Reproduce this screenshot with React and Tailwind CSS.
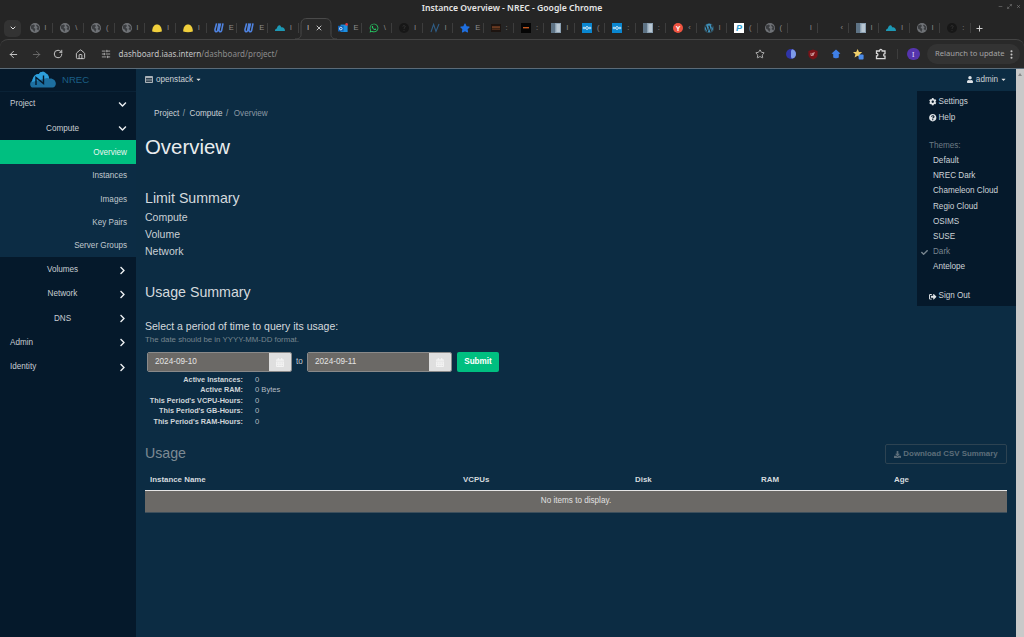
import React from 'react';
import { ArrowLeft, ArrowRight, RotateCw, Home, Star, ChevronDown, X, Plus, EllipsisVertical, SlidersHorizontal, Minus, Maximize2 } from 'lucide-react';
import { FaChevronDown, FaChevronRight, FaCog, FaQuestionCircle, FaCheck, FaUser, FaCaretDown, FaCalendarAlt, FaDownload, FaSignOutAlt, FaWhatsapp, FaWordpress, FaStar } from 'react-icons/fa';

const Globe = () => (
  <svg viewBox="0 0 10 10" className="w-[10px] h-[10px]"><circle cx="5" cy="5" r="5" fill="#6f7276"/><path d="M1 2.5 4 1.5 5 3 3.6 4.4 5.4 6 4.4 9 2.6 6.6 1 5.4ZM7 1.4 9.4 4 8.6 7.5 6.4 6 7.6 4.4 6 2.6Z" fill="#3b3d40"/></svg>
);
const Dome = () => (
  <svg viewBox="0 0 10 10" className="w-[10px] h-[10px]"><path d="M.2 8.6C0 4 2.2 1.4 5 1.4S10 4 9.8 8.6C7 9.4 3 9.4.2 8.6Z" fill="#f0cf3c"/></svg>
);
const U = () => (
  <svg viewBox="0 0 10 10" className="w-[10px] h-[10px]"><path d="M2.6.4 1 6.5C.7 8.8 2.6 9.6 3.6 7.6L5 .4M6.6.4 5 6.5C4.7 8.8 6.6 9.6 7.6 7.6L9 .4" fill="none" stroke="#4f83e0" strokeWidth="1.6"/></svg>
);
const Cloud = () => (
  <svg viewBox="0 0 10 10" className="w-[10px] h-[10px]"><path d="M0 8C-.1 6.2 1 5.4 1.8 5.4 2.4 3.2 3.6 2 4.6 2.2 5.6 2.4 6 3.8 6.6 4.4 8 4 10 5.2 10 8Z" fill="#1d98b4"/></svg>
);
const Outlook = () => (
  <svg viewBox="0 0 10 10" className="w-[10px] h-[10px]"><rect x="2.6" y="1.6" width="7" height="7.4" fill="#1c8fe0"/><rect x="0" y="2.8" width="5.6" height="5.6" fill="#0f62b8"/><circle cx="2.8" cy="5.6" r="1.3" fill="none" stroke="#fff" strokeWidth=".8"/><circle cx="8.6" cy="1.4" r="1.3" fill="#e23b3b"/></svg>
);
const Dark = () => (
  <svg viewBox="0 0 10 10" className="w-[10px] h-[10px]"><circle cx="5" cy="5" r="5" fill="#171717"/><path d="M3.8 3.4C4 2.4 6.2 2.4 6.2 3.6 6.2 4.6 5 4.6 5 5.8M5 7V7.8" stroke="#333" strokeWidth="1" fill="none"/></svg>
);
const NIcon = () => (
  <svg viewBox="0 0 10 10" className="w-[10px] h-[10px]"><path d="M1 9 3.6 1.4 6 8.4 9 1" fill="none" stroke="#2f5d86" strokeWidth="1.1"/></svg>
);
const RedBar = () => (
  <svg viewBox="0 0 10 10" className="w-[10px] h-[10px]"><rect y="1" width="10" height="8" fill="#1d1410"/><rect x="1" y="3.4" width="8" height="1.3" fill="#8a4a28"/><rect x="1" y="5.6" width="8" height="1" fill="#6d3c20"/></svg>
);
const BlackBar = () => (
  <svg viewBox="0 0 10 10" className="w-[10px] h-[10px]"><rect width="10" height="10" fill="#050505"/><rect x="2" y="4" width="6" height="1.4" fill="#c4571e"/></svg>
);
const Book = () => (
  <svg viewBox="0 0 10 10" className="w-[10px] h-[10px]"><rect width="10" height="10" fill="#8ba0b2"/><rect x="0" width="4" height="10" fill="#5e7385"/><path d="M5.4 2H9M5.4 4H9M5.4 6H9M5.4 8H9" stroke="#e6edf2" strokeWidth="1"/></svg>
);
const NC = () => (
  <svg viewBox="0 0 10 10" className="w-[10px] h-[10px]"><rect width="10" height="10" fill="#0a86cf"/><circle cx="5" cy="5" r="1.4" fill="none" stroke="#fff" strokeWidth=".8"/><circle cx="2" cy="5" r=".9" fill="none" stroke="#fff" strokeWidth=".7"/><circle cx="8" cy="5" r=".9" fill="none" stroke="#fff" strokeWidth=".7"/></svg>
);
const Y = () => (
  <div className="w-[10px] h-[10px] rounded-full bg-[#ee5340] flex items-center justify-center text-[7px] font-bold text-white font-['Liberation_Sans',sans-serif] leading-none">Y</div>
);
const P = () => (
  <div className="w-[10px] h-[10px] bg-white flex items-center justify-center text-[9px] font-bold italic text-[#2a9bd0] font-['Liberation_Sans',sans-serif] leading-none">P</div>
);
const Wa = () => <FaWhatsapp className="w-[10px] h-[10px] text-[#25d366]" />;
const Wp = () => <FaWordpress className="w-[10px] h-[10px] text-[#3f93bd]" />;
const St = () => <FaStar className="w-[10px] h-[10px] text-[#1f6fe0]" />;
const None = () => <div className="w-[10px] h-[10px]" />;

const leftTabs = [[Globe,'l'],[Globe,'\\'],[Globe,'('],[Globe,'l'],[Dome,'l'],[Dome,'l'],[U,'E'],[U,'E'],[Cloud,'l']];
const rightTabs = [[Outlook,'E'],[Wa,'\\'],[Dark,'l'],[NIcon,'l'],[St,'E'],[RedBar,':'],[BlackBar,':'],[Book,'l'],[NC,'('],[NC,':'],[Book,':'],[Y,'‹'],[Wp,'l'],[P,'('],[Globe,'('],[None,'l'],[None,'‹'],[Book,'l'],[Cloud,'l'],[Globe,'l'],[Dark,':']];

function Tab({ icon: Icon, ch, narrow }) {
  return (
    <div className={narrow ? 'relative w-[30.45px] shrink-0 h-[22px] flex items-center pl-[7px]' : 'relative w-[30.7px] shrink-0 h-[22px] flex items-center pl-[7px]'}>
      <Icon />
      <span className="absolute left-[22px] text-[7.5px] text-[#8e8e8e] leading-none font-['Liberation_Sans',sans-serif]">{ch}</span>
      <span className="absolute right-0 top-[6px] h-[10px] w-px bg-[#3d3d3d]" />
    </div>
  );
}

function SideRow({ children, open, pl }) {
  return (
    <div className="h-[24.3px] pt-[1.5px] flex items-center relative text-[#c8cdd2]">
      <div className={pl ? 'pl-[10px]' : 'w-[125px] text-center'}>{children}</div>
      {open === undefined ? null : open ? (
        <FaChevronDown className="absolute left-[117.5px] w-[9px] h-[9px] text-[#eceff2]" />
      ) : (
        <FaChevronRight className="absolute left-[117.5px] w-[9px] h-[9px] text-[#eceff2]" />
      )}
    </div>
  );
}

function SubRow({ children, active }) {
  return (
    <div className={active ? 'h-[24px] pt-[1.5px] flex items-center justify-end pr-[9px] bg-[#00bf80] text-[#e9f5f0]' : 'h-[23.25px] pt-[1.5px] flex items-center justify-end pr-[9px] text-[#c0c8ce]'}>{children}</div>
  );
}

const stats = [
  ["Active Instances:", "0"],
  ["Active RAM:", "0 Bytes"],
  ["This Period's VCPU-Hours:", "0"],
  ["This Period's GB-Hours:", "0"],
  ["This Period's RAM-Hours:", "0"],
];

const themes = ['Default', 'NREC Dark', 'Chameleon Cloud', 'Regio Cloud', 'OSIMS', 'SUSE', 'Dark', 'Antelope'];

function DateInput({ value }) {
  return (
    <div className="flex h-[20px] w-[145px] rounded-[2px] overflow-hidden border border-[#8a8a8a]">
      <div className="flex-1 bg-[#6b6966] flex items-center pl-[7px] text-[#e4e4e4] text-[8.2px]">{value}</div>
      <div className="w-[22px] bg-[#dfdfdf] flex items-center justify-center">
        <FaCalendarAlt className="w-[8px] h-[9px] text-[#f4f4f4]" />
      </div>
    </div>
  );
}

export default function App() {
  return (
    <div className="w-[1024px] h-[637px] overflow-hidden flex flex-col bg-[#252525] font-['Liberation_Sans',sans-serif]">
      {/* Title bar */}
      <div className="h-[17px] shrink-0 relative flex items-center justify-center font-['Noto_Sans',sans-serif] text-[8.65px] font-semibold text-[#e6e6e6]">
        Instance Overview - NREC - Google Chrome
        <div className="absolute right-[3px] top-[4px] flex items-center gap-[4px] text-[#a0a0a0]">
          <Minus className="w-[5px] h-[5px]" />
          <Maximize2 className="w-[5px] h-[5px]" />
          <X className="w-[5px] h-[5px]" />
        </div>
      </div>
      {/* Tab strip */}
      <div className="h-[22px] shrink-0 relative flex items-center pl-[4px] font-['Noto_Sans',sans-serif] z-10">
        <div className="w-[17px] h-[17px] rounded-[5px] bg-[#333333] flex items-center justify-center mr-[1.5px] shrink-0">
          <ChevronDown className="w-[8px] h-[8px] text-[#e0e0e0]" strokeWidth={3} />
        </div>
        {leftTabs.map(([I, c], i) => <Tab key={i} icon={I} ch={c} />)}
        <div className="relative w-[32.7px] shrink-0 h-[22px] flex items-center">
          <svg viewBox="0 0 44 22" className="absolute left-[-4px] top-0 w-[44px] h-[23px]">
            <path d="M0 21.5C4 21.5 6 20 6 17V7C6 3 8 1 12 1H30C34 1 36 3 36 7V17C36 20 38 21.5 42 21.5" fill="#292929" stroke="#4a4a4a" strokeWidth="1"/>
          </svg>
          <span className="absolute left-[8.5px] text-[7.5px] text-[#c8c8c8] leading-none font-['Liberation_Sans',sans-serif]">l</span>
          <X className="absolute left-[16px] w-[8px] h-[8px] text-[#e0e0e0]" strokeWidth={2.5} />
        </div>
        {rightTabs.map(([I, c], i) => <Tab key={i} narrow icon={I} ch={c} />)}
        <Plus className="w-[9px] h-[9px] ml-[4px] text-[#d8d8d8]" strokeWidth={2.5} />
      </div>
      {/* Toolbar */}
      <div className="h-[29px] shrink-0 bg-[#292929] border-t border-[#444444] rounded-t-[8px] flex items-center text-[#c8c8c8] relative">
        <ArrowLeft className="w-[11px] h-[11px] ml-[8px] text-[#d0d0d0]" strokeWidth={2} />
        <ArrowRight className="w-[11px] h-[11px] ml-[11.5px] text-[#6d6d6d]" strokeWidth={2} />
        <RotateCw className="w-[10px] h-[10px] ml-[11.5px] text-[#d0d0d0]" strokeWidth={2.2} />
        <Home className="w-[11px] h-[11px] ml-[11.5px] text-[#d0d0d0]" strokeWidth={2} />
        <SlidersHorizontal className="w-[10px] h-[10px] ml-[15px] text-[#b8b8b8]" strokeWidth={2} />
        <div className="ml-[8px] text-[8.05px] font-['Noto_Sans',sans-serif] whitespace-nowrap">
          <span className="text-[#c4c4c4]">dashboard.iaas.intern</span><span className="text-[#8c8c8c]">/dashboard/project/</span>
        </div>
        <Star className="w-[10px] h-[10px] absolute left-[755px] text-[#c8c8c8]" strokeWidth={2} />
        <div className="absolute left-[786px] w-[10px] h-[10px] rounded-full bg-[#2f35a8] overflow-hidden flex justify-end">
          <div className="w-[5px] h-[10px] rounded-full bg-[#7d9be8]" />
        </div>
        <svg viewBox="0 0 10 10" className="absolute left-[808px] w-[10px] h-[11px]"><path d="M.4 1.4 5 0 9.6 1.4V5.6C9.6 8 7 9.4 5 10 3 9.4.4 8 .4 5.6Z" fill="#7a1318"/><path d="M3 3.4V6H4.6V3.4M5.4 6V3.4H7" stroke="#e8c8c8" strokeWidth=".7" fill="none"/></svg>
        <svg viewBox="0 0 10 10" className="absolute left-[831px] w-[10px] h-[10px]"><path d="M5 .6 9.4 4.4 7.8 5V8.6C6.6 9.6 3.4 9.6 2.2 8.6V5L.6 4.4Z" fill="#3f7fe6"/></svg>
        <svg viewBox="0 0 11 11" className="absolute left-[853px] w-[11px] h-[11px]"><path d="M4.6 0 6 3H9.2L6.8 5.2 7.6 8.6 4.6 6.8 1.6 8.6 2.4 5.2 0 3H3.2Z" fill="#f0cf6a"/><rect x="5.6" y="5.4" width="5" height="5" rx="1" fill="#4b8be8"/></svg>
        <svg viewBox="0 0 12 12" className="absolute left-[875px] w-[12px] h-[12px]"><path d="M1.5 3H4.4C4.4 1 7.2 1 7.2 3H10V5.6C8.2 5.6 8.2 8.2 10 8.2V10.6H1.5V8C3.4 8 3.4 5.4 1.5 5.4Z" fill="none" stroke="#d8d8d8" strokeWidth="1.3"/></svg>
        <div className="absolute left-[897px] top-[9px] w-px h-[10px] bg-[#3d3d3d]" />
        <div className="absolute left-[907px] w-[12.5px] h-[12.5px] rounded-full bg-[#5534ad] flex items-center justify-center text-[7px] text-[#e8e0ff] font-['Noto_Sans',sans-serif] leading-none">I</div>
        <div className="absolute left-[927px] top-[4px] w-[93px] h-[20px] rounded-full bg-[#333333] flex items-center pl-[8px] text-[7.6px] whitespace-nowrap text-[#a4a4a4] font-['Noto_Sans',sans-serif]">
          Relaunch to update
          <EllipsisVertical className="absolute right-[3px] w-[11px] h-[11px] text-[#c8c8c8]" strokeWidth={2.5} />
        </div>
      </div>
      <div className="h-px shrink-0 bg-[#5b6b78]" />
      {/* Page */}
      <div className="flex-1 flex min-h-0 text-[8.15px]">
        {/* Sidebar */}
        <aside className="w-[136px] shrink-0 bg-[#05192b] flex flex-col">
          <div className="h-[22.6px] flex items-center pl-[30px] border-b border-[#0a2236]">
            <svg viewBox="0 0 26 17" className="w-[26px] h-[17px]">
              <path d="M2 16.5C-.5 15-.5 11 2.4 9.8 3 5 6 2.5 9 3 10 .6 14 -.2 16 2.4 18.5 3.2 19 6.4 19 7.6 24 6.8 27 11 25.4 14.6 24.8 15.8 24 16.5 23 16.5Z" fill="#1d6fa0"/>
              <path d="M2 11C2.6 5.4 6 2.4 9 3 10 .6 14-.2 16 2.4 18 3 19 5.4 19 7.6L17 7Z" fill="#2d9fdc"/>
              <path d="M6 14V6.5L13.5 12.5V4.5" fill="none" stroke="#05192b" strokeWidth="1.4"/>
            </svg>
            <span className="ml-[6px] text-[9.6px] text-[#1b5f86]">NREC</span>
          </div>
          <SideRow pl open>Project</SideRow>
          <SideRow open>Compute</SideRow>
          <div className="bg-[#0c2c44]">
            <SubRow active>Overview</SubRow>
            <SubRow>Instances</SubRow>
            <SubRow>Images</SubRow>
            <SubRow>Key Pairs</SubRow>
            <SubRow>Server Groups</SubRow>
          </div>
          <SideRow open={false}>Volumes</SideRow>
          <SideRow open={false}>Network</SideRow>
          <SideRow open={false}>DNS</SideRow>
          <SideRow pl open={false}>Admin</SideRow>
          <SideRow pl open={false}>Identity</SideRow>
        </aside>
        {/* Main */}
        <main className="flex-1 min-w-0 bg-[#0c2c43] relative text-[#dfe3e6] pl-[9px] pr-[9px] flex flex-col">
          <div className="h-[22px] flex items-center justify-between">
            <div className="flex items-center text-[#ccd2d6]">
              <svg viewBox="0 0 8 7" className="w-[8px] h-[7px] mr-[3px]"><rect width="8" height="7" rx=".8" fill="#aab2b8"/><rect x="1" y="2" width="6" height="4" fill="#2a3d4c"/><path d="M1 3.4H7M1 4.7H7" stroke="#aab2b8" strokeWidth=".5"/></svg>
              openstack
              <FaCaretDown className="w-[7px] h-[7px] ml-[2px] text-[#e0e0e0]" />
            </div>
            <div className="flex items-center text-[#ccd2d6]">
              <FaUser className="w-[6px] h-[7px] mr-[3px] text-[#e0e4e8]" />
              admin
              <FaCaretDown className="w-[7px] h-[7px] ml-[2px] text-[#e0e0e0]" />
            </div>
          </div>
          <div className="mt-[18px] pl-[9px] h-[10px] flex items-center text-[#ccd2d6]">
            Project<span className="mx-[3.5px] text-[#98a4ad]">/</span> <span className="ml-[1px]">Compute</span><span className="mx-[3.5px] text-[#98a4ad]">/</span> <span className="ml-[2px] text-[#8b99a4]">Overview</span>
          </div>
          <h1 className="mt-[14px] text-[20.4px] leading-[28px] text-[#e9ecee]">Overview</h1>
          <h3 className="mt-[27px] text-[14.2px] leading-[20px] text-[#d5dade]">Limit Summary</h3>
          <div className="mt-[1px] text-[10.5px] leading-[17px] text-[#c9d0d5]">
            <div>Compute</div>
            <div>Volume</div>
            <div>Network</div>
          </div>
          <h3 className="mt-[22px] text-[14.2px] leading-[20px] text-[#d5dade]">Usage Summary</h3>
          <div className="mt-[17px] text-[10.5px] leading-[14px] text-[#d5dade]">Select a period of time to query its usage:</div>
          <div className="mt-[1px] text-[7.85px] leading-[12px] text-[#77868f]">The date should be in YYYY-MM-DD format.</div>
          <div className="mt-[6px] pl-[2px] flex items-center">
            <DateInput value="2024-09-10" />
            <span className="w-[15px] text-center text-[#c4cace]">to</span>
            <DateInput value="2024-09-11" />
            <button className="ml-[5px] w-[42px] h-[20px] rounded-[2px] bg-[#00bf80] text-white font-bold text-[8.15px]">Submit</button>
          </div>
          <div className="mt-[3px] grid grid-cols-[98px_auto] justify-start gap-x-[12px] text-[7.25px] leading-[10.4px]">
            {stats.map(([k, v]) => (
              <React.Fragment key={k}>
                <div className="font-bold text-right whitespace-nowrap text-[#cfd5d9]">{k}</div>
                <div className="text-[#b5bdc3] text-[7.6px]">{v}</div>
              </React.Fragment>
            ))}
          </div>
          <div className="mt-[16px] flex items-center justify-between">
            <div className="mb-[2px] text-[14.2px] leading-[20px] text-[#7d8a93]">Usage</div>
            <div className="w-[122px] h-[20px] rounded-[2px] border border-[#2d4352] flex items-center justify-center text-[#5d6e7a] font-bold text-[7.9px]">
              <FaDownload className="w-[7px] h-[7px] mr-[2px]" />Download CSV Summary
            </div>
          </div>
          <div className="mt-[5px] h-[21px] pl-[5px] grid grid-cols-[313px_172px_126px_133px_1fr] items-center font-bold text-[#d5dade] text-[7.9px] border-b-[1.5px] border-[#e6e6e6]">
            <div>Instance Name</div>
            <div>VCPUs</div>
            <div>Disk</div>
            <div>RAM</div>
            <div>Age</div>
          </div>
          <div className="h-[22px] bg-[#6b6966] flex items-center justify-center text-[#e0e0e0] border-b border-[#3d4f5c]">No items to display.</div>
          {/* User menu */}
          <div className="absolute right-0 top-[22px] w-[99px] h-[215px] bg-[#05192b] text-[#cdd3d8] z-20 pt-[3px]">
            <div className="h-[16px] flex items-center pl-[12px]"><FaCog className="w-[7.5px] h-[7.5px] mr-[2px] text-[#dfe3e6]" />Settings</div>
            <div className="h-[15.5px] flex items-center pl-[12px]"><FaQuestionCircle className="w-[7.5px] h-[7.5px] mr-[2px] text-[#dfe3e6]" />Help</div>
            <div className="mt-[13px] h-[15px] flex items-center pl-[12px] text-[#6d7b86]">Themes:</div>
            {themes.map(t => (
              <div key={t} className={t === 'Dark' ? 'relative h-[15.2px] flex items-center pl-[16px] text-[#77848e]' : 'h-[15.2px] flex items-center pl-[16px]'}>
                {t === 'Dark' ? <FaCheck className="absolute left-[4px] w-[7px] h-[7px] text-[#77848e]" /> : null}
                {t}
              </div>
            ))}
            <div className="mt-[14px] h-[15px] flex items-center pl-[12px]"><FaSignOutAlt className="w-[7.5px] h-[7.5px] mr-[2px] text-[#dfe3e6]" />Sign Out</div>
          </div>
        </main>
        {/* Scrollbar */}
        <div className="w-[8px] shrink-0 bg-[#c9c9c9] flex justify-center pt-[4px]">
          <div className="w-0 h-0 border-l-[2px] border-r-[2px] border-b-[3px] border-l-transparent border-r-transparent border-b-[#8a8a8a]" />
        </div>
      </div>
    </div>
  );
}
